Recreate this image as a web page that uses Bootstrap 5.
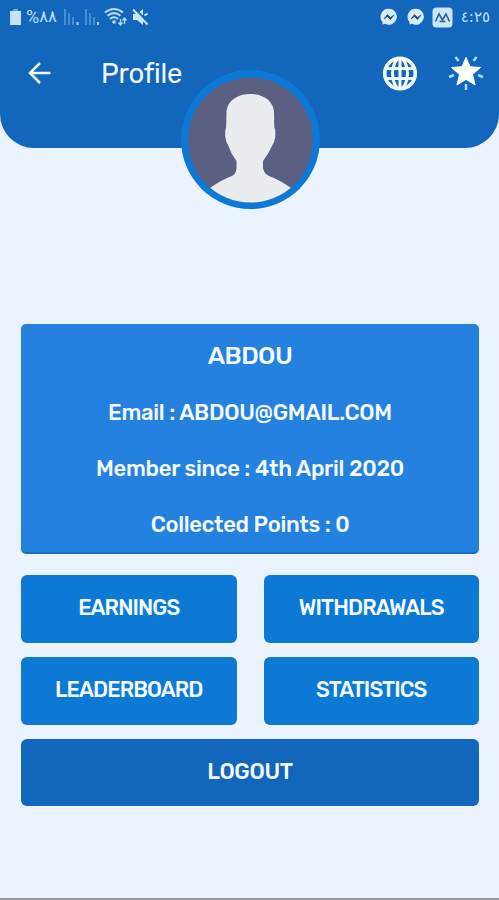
<!DOCTYPE html>
<html lang="en">
<head>
<meta charset="utf-8">
<meta name="viewport" content="width=device-width, initial-scale=1">
<title>Profile</title>
<link rel="stylesheet" href="https://cdn.jsdelivr.net/npm/bootstrap@5.3.0/dist/css/bootstrap.min.css">
<style>
  body { font-family: Rubik, Roboto, "Liberation Sans", sans-serif; background: #ebf4fe; color: #f3fbff; }
  .screen { height: 900px; border-bottom: 2px solid #929599; }
  .top-panel { height: 148px; background: #1266bb; border-radius: 0 0 34px 34px; }
  .status-bar { height: 34px; padding: 0 9px; color: #bfe1fb; font-family: "DejaVu Sans", sans-serif; }
  .status-bar svg, .app-bar svg { display: block; flex: none; }
  .pct { font: 18px/1 Roboto, sans-serif; margin-left: 4px; }
  .level { font-size: 16.5px; line-height: 1; margin-right: -1px; }
  .clock { font-size: 15px; line-height: 1; margin-left: 8px; }
  .app-bar { height: 78px; padding: 0 15px 0 27px; }
  .title { font-size: 27.5px; font-weight: 400; line-height: 1; margin: 1px 0 0 49px; letter-spacing: -.2px; }
  .bubble-gap { margin-left: 9px; }
  .app-gap { margin-left: 7px; }
  .star-gap { margin-left: 30px; }
  .avatar { width: 139px; height: 139px; margin: -78px auto 0; position: relative; left: .5px; }
  .avatar svg { display: block; }
  .content { padding: 115px 20px 0 21px; }
  .info { height: 230px; background: #2581e0; border-radius: 5px; border-bottom: 2px solid #146fc8; font-size: 22px; letter-spacing: -.27px; font-weight: 500; line-height: 28px; padding-top: 17px; }
  .user-name { font-size: 25px; letter-spacing: -.6px; font-weight: 500; line-height: 30px; margin-bottom: 28px; }
  .tiles { --bs-gutter-x: 27px; --bs-gutter-y: 14px; margin-top: 7px; }
  .tile { --bs-btn-color: #f3fbff; --bs-btn-bg: #0c79d5; --bs-btn-hover-color: #fff; --bs-btn-hover-bg: #0a6dc1;
          --bs-btn-border-radius: 6px; --bs-btn-font-weight: 500; --bs-btn-font-size: 21.5px; letter-spacing: -.9px; height: 68px; border: 0; padding: 0 0 2px; }
  .tile.logout { --bs-btn-bg: #1266bb; --bs-btn-font-size: 22px; letter-spacing: -.3px; height: 67px; }
</style>
</head>
<body>
<main class="screen overflow-hidden">
  <header class="top-panel">
    <div class="status-bar d-flex align-items-center" dir="ltr">
      <svg width="13" height="18" viewBox="0 0 13 18" fill="#c3e4fb"><path d="M4 1h5v2H4z" opacity=".5"/><path d="M1 3h11v14H1z"/></svg>
      <span class="pct">%</span><span class="level">٨٨</span>
      <svg class="ms-2" width="36" height="18" viewBox="0 0 36 18" stroke="#5a9ddc" stroke-width="1.5"><path d="M1 1v16M5 5v12M9 9v8M22 1v16M26 5v12M30 9v8"/><path d="M13.5 14v3M34 14v3" stroke="#a4d0f4" stroke-width="2"/></svg>
      <svg class="ms-1" width="24" height="20" viewBox="0 0 24 20" fill="none" stroke="#b5dbf7" stroke-width="2"><path d="M1 5.500Q10 -1.500 19 5.500M3.500 8.800Q10 3.500 16.500 8.800M6 12Q10 8.500 14 12"/><circle cx="10" cy="15" r="1.800" fill="#b5dbf7" stroke="none"/><path d="M16.500 18v-6M14.500 15.500l2 2.500 2-2.500M20.500 11v6M18.500 13.500l2-2.500 2 2.500" stroke-width="1.400"/></svg>
      <svg class="ms-1" width="17" height="18" viewBox="0 0 17 18"><path d="M1 6h4l6-5v16l-6-5H1z" fill="#c9e7fb"/><path d="M2 0l14 14" stroke="#1266bb" stroke-width="2"/><path d="M1 1.500l14.500 15M12.500 7.500l3-2" stroke="#c9e7fb" stroke-width="2"/></svg>
      <svg class="ms-auto" width="18" height="18" viewBox="0 0 18 18"><path d="M9 .8a8 8 0 1 1-4 15l-2.500.8V14A8 8 0 0 1 9 .8z" fill="#d4ecfc"/><path d="M4 11l3.500-4.500 3 3L14 7l-3.500 4.500-3-3z" fill="#174c78" stroke="#174c78" stroke-width=".7"/></svg>
      <svg class="bubble-gap" width="18" height="18" viewBox="0 0 18 18"><path d="M9 .8a8 8 0 1 1-4 15l-2.500.8V14A8 8 0 0 1 9 .8z" fill="#d4ecfc"/><path d="M4 11l3.500-4.500 3 3L14 7l-3.500 4.500-3-3z" fill="#174c78" stroke="#174c78" stroke-width=".7"/></svg>
      <svg class="app-gap" width="21" height="21" viewBox="0 0 21 21"><rect x=".5" y=".5" width="20" height="20" rx="4" fill="#c9e6fa"/><path d="M3.500 14.500L7 7l3.500 6L14 7l3.500 7.500M7.500 14.500h6" fill="none" stroke="#31668f" stroke-width="1.700"/></svg>
      <span class="clock">٤:٢٥</span>
    </div>
    <nav class="app-bar d-flex align-items-center">
      <svg width="25" height="24" viewBox="0 0 25 24" fill="none" stroke="#eefaff" stroke-width="2.500"><path d="M23.500 12H3M13 2L3 12l10 10"/></svg>
      <h1 class="title">Profile</h1>
      <svg class="ms-auto" width="36" height="36" viewBox="0 0 36 36" fill="none" stroke="#f5fcff" stroke-width="3"><circle cx="18" cy="18.500" r="15.300" stroke-width="3.600"/><ellipse cx="18" cy="18.500" rx="7.500" ry="15"/><path d="M18 3v31M4 13.500h28M4 23.500h28"/></svg>
      <svg class="star-gap" width="36" height="36" viewBox="0 0 36 36"><path d="M18 2.500l4 9.200 10.500.8-8 7 2.600 10.500-9.100-5.600L8.900 30l2.600-10.500-8-7 10.500-.8z" fill="#fbfffa" stroke="#fbfffa"/><path d="M7.500 2l3 4M28.500 2l-3 4M1 22l5-2M35 22l-5-2M18 29v6" stroke="#a7e0f6" stroke-width="2.500"/></svg>
    </nav>
  </header>

  <div class="avatar">
    <svg width="139" height="139" viewBox="0 0 139 139">
      <defs><clipPath id="face"><circle cx="69.500" cy="70" r="62.500"/></clipPath></defs>
      <circle cx="69.500" cy="69.500" r="69.500" fill="#0d79d6"/>
      <circle cx="69.500" cy="70" r="62.500" fill="#5b6083"/>
      <path clip-path="url(#face)" fill="#e9edf0" d="M69.500 24C82 24 91.500 30 93 41L93.300 57Q94.800 60 94.200 67Q93.500 72 91.500 75Q88 83 82 91L82 98Q82.500 103 88 106Q99 110 110 118L112 139H27L29 118Q40 110 51 106Q55.500 103 55.500 98V91Q50 84 47 75Q45 72 44.300 67Q43.800 60 45.200 57L45.500 41C47 30 57 24 69.500 24Z"/>
    </svg>
  </div>

  <div class="content">
    <section class="info text-center">
      <h2 class="user-name">ABDOU</h2>
      <p class="mb-4 pb-1">Email : ABDOU@GMAIL.COM</p>
      <p class="mb-4 pb-1">Member since : 4th April 2020</p>
      <p class="mb-0">Collected Points : 0</p>
    </section>
    <div class="row tiles">
      <div class="col-6"><button type="button" class="btn tile w-100">EARNINGS</button></div>
      <div class="col-6"><button type="button" class="btn tile w-100">WITHDRAWALS</button></div>
      <div class="col-6"><button type="button" class="btn tile w-100">LEADERBOARD</button></div>
      <div class="col-6"><button type="button" class="btn tile w-100">STATISTICS</button></div>
      <div class="col-12"><button type="button" class="btn tile logout w-100">LOGOUT</button></div>
    </div>
  </div>
</main>
<script src="https://cdn.jsdelivr.net/npm/bootstrap@5.3.0/dist/js/bootstrap.bundle.min.js"></script>
</body>
</html>
